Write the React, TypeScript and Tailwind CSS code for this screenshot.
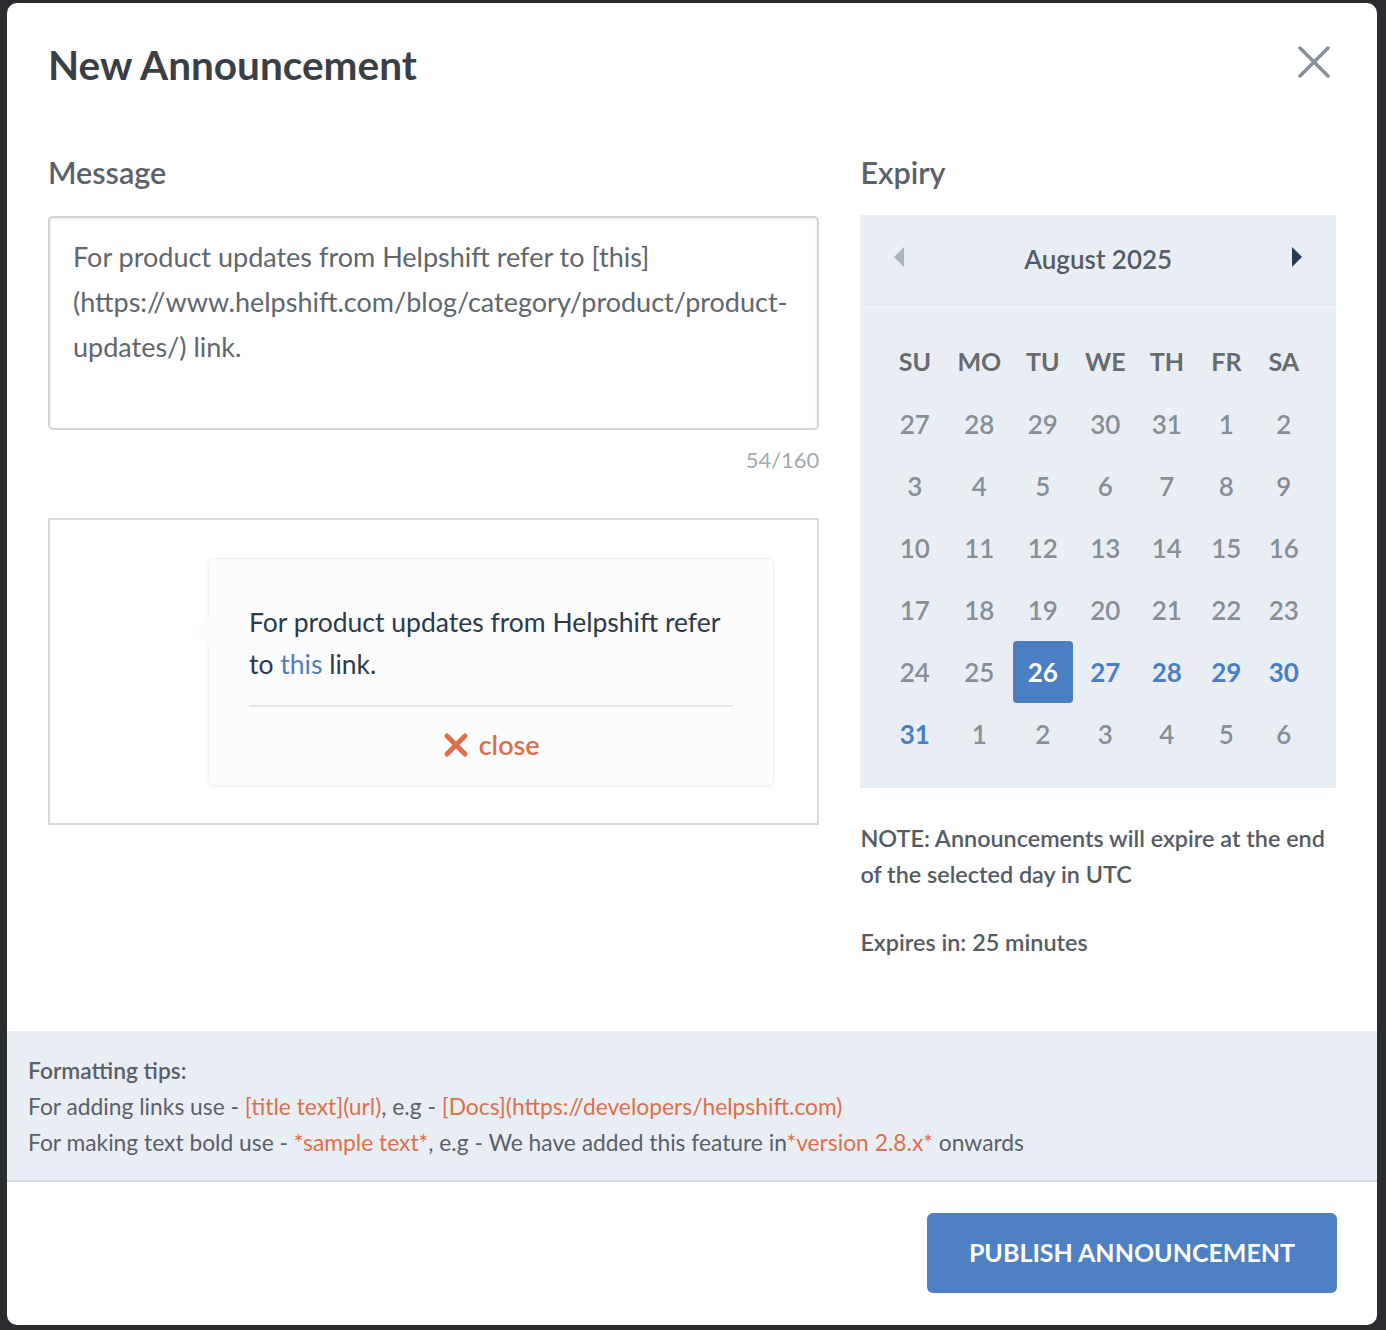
import { useState } from 'react';

const FONT = "font-['Lato','Noto_Sans',sans-serif]";

type Day = { n: number; muted?: boolean; future?: boolean; selected?: boolean };

const WEEKS: Day[][] = [
  [27, 28, 29, 30, 31].map((n) => ({ n, muted: true })).concat([{ n: 1 }, { n: 2 }]),
  [3, 4, 5, 6, 7, 8, 9].map((n) => ({ n })),
  [10, 11, 12, 13, 14, 15, 16].map((n) => ({ n })),
  [17, 18, 19, 20, 21, 22, 23].map((n) => ({ n })),
  [
    { n: 24 },
    { n: 25 },
    { n: 26, selected: true },
    { n: 27, future: true },
    { n: 28, future: true },
    { n: 29, future: true },
    { n: 30, future: true },
  ],
  [{ n: 31, future: true }, ...[1, 2, 3, 4, 5, 6].map((n) => ({ n, muted: true }))],
];

const DAY_NAMES = ['SU', 'MO', 'TU', 'WE', 'TH', 'FR', 'SA'];

const Calendar = () => {
  return (
    <div className="mt-[23px] bg-[#e9eef5]">
      <div className="flex h-[90px] items-center justify-between border-b border-[#e1e5ea] px-[34px]">
        <svg width="10" height="20" viewBox="0 0 10 20" className="mt-[-6px]">
          <path d="M10 0 L0 10 L10 20 Z" fill="#a9b4c0" />
        </svg>
        <span className="text-[26px] font-semibold text-[#555c65]">August 2025</span>
        <svg width="10" height="20" viewBox="0 0 10 20" className="mt-[-6px]">
          <path d="M0 0 L10 10 L0 20 Z" fill="#263a52" />
        </svg>
      </div>
      <div className="grid grid-cols-[65px_64px_63px_62px_61px_58px_57px] pl-[22px] pt-[26px] pb-[23px]">
        {DAY_NAMES.map((d) => (
          <div
            key={d}
            className="flex h-[62px] items-center justify-center text-[25px] font-bold text-[#676a6e]"
          >
            {d}
          </div>
        ))}
        {WEEKS.flat().map((day, i) => (
          <div key={i} className="flex h-[62px] items-center justify-center">
            {day.selected ? (
              <span className="flex h-[62px] w-[60px] items-center justify-center rounded-[4px] bg-[#4b7fc4] text-[26px] font-bold text-white">
                {day.n}
              </span>
            ) : (
              <span
                className={
                  day.future
                    ? 'text-[26px] font-bold text-[#4a7fc4]'
                    : 'text-[26px] font-semibold text-[#878e96]'
                }
              >
                {day.n}
              </span>
            )}
          </div>
        ))}
      </div>
    </div>
  );
};

const PreviewCard = () => (
  <div className="mt-[43px] h-[307px] border-2 border-[#d9d9d9] pl-[158px] pr-[43px] pt-[38px]">
    <div className="relative rounded-[6px] border border-[#f1f1f1] bg-[#fcfcfc] px-[40px] pt-[42px] pb-[20px] shadow-[0_1px_4px_rgba(0,0,0,0.06)]">
      <div className="absolute left-[-10px] top-[62px] h-[20px] w-[20px] rotate-45 bg-[#fcfcfc]" />
      <p className="relative text-[26.5px] leading-[42px] text-[#2b394a]">
        For product updates from Helpshift refer to <span className="text-[#4a7fc4]">this</span> link.
      </p>
      <div className="mt-[20px] border-t-2 border-[#e6e6e6]" />
      <div className="mt-[18px] flex h-[40px] items-center justify-center gap-[10px] text-[#de6e4a]">
        <svg width="26" height="26" viewBox="0 0 26 26">
          <path d="M4 4 L22 22 M22 4 L4 22" stroke="#de6e4a" strokeWidth="5" strokeLinecap="round" />
        </svg>
        <span className="text-[27px] font-semibold">close</span>
      </div>
    </div>
  </div>
);

export default function App() {
  const [message] = useState(
    'For product updates from Helpshift refer to [this](https://www.helpshift.com/blog/category/product/product-updates/) link.',
  );

  return (
    <div className={`min-h-[1330px] bg-[#2a2c2f] pt-[3px] pl-[7px] pr-[9px] ${FONT}`}>
      <div className="flex h-[1322px] flex-col overflow-hidden rounded-[10px] bg-white">
        <header className="flex items-start justify-between pl-[41px] pr-[47px] pt-[35px]">
          <h1 className="text-[40.5px] font-bold leading-[54px] text-[#3a3f45]">New Announcement</h1>
          <button className="mt-[8px]" aria-label="Close">
            <svg width="32" height="32" viewBox="0 0 32 32">
              <path d="M2 2 L30 30 M30 2 L2 30" stroke="#878f97" strokeWidth="3.5" strokeLinecap="round" />
            </svg>
          </button>
        </header>

        <div className="flex flex-1 gap-[41px] px-[41px] pt-[60px]">
          <section className="w-[772px]">
            <h2 className="text-[30.5px] font-semibold leading-[40px] text-[#5b6168]">Message</h2>
            <textarea
              readOnly
              value={message}
              className="mt-[24px] block h-[214px] w-full resize-none rounded-[5px] border-2 border-[#d3d3d3] px-[23px] pt-[16px] text-[27px] leading-[45px] text-[#60666d] shadow-[inset_0_1px_3px_rgba(0,0,0,0.08)] outline-none"
            />
            <div className="mt-[15px] text-right text-[22px] leading-[30px] text-[#a3aab2]">54/160</div>
            <PreviewCard />
          </section>

          <section className="w-[476px]">
            <h2 className="text-[30.5px] font-semibold leading-[40px] text-[#5b6168]">Expiry</h2>
            <Calendar />
            <p className="mt-[32px] text-[23.4px] font-semibold leading-[36px] text-[#545b63]">
              NOTE: Announcements will expire at the end of the selected day in UTC
            </p>
            <p className="mt-[32px] text-[23.4px] font-semibold leading-[36px] text-[#545b63]">
              Expires in: 25 minutes
            </p>
          </section>
        </div>

        <div className="border-b-2 border-[#d6d9dd] bg-[#e9eef5] px-[21px] pt-[21px] pb-[20px] text-[22.8px] leading-[36px] text-[#5a6067]">
          <div className="font-semibold">Formatting tips:</div>
          <div>
            For adding links use - <span className="text-[#de6e4a]">[title text](url)</span>, e.g -{' '}
            <span className="text-[#de6e4a]">[Docs](https://developers/helpshift.com)</span>
          </div>
          <div>
            For making text bold use - <span className="text-[#de6e4a]">*sample text*</span>, e.g - We have
            added this feature in<span className="text-[#de6e4a]">*version 2.8.x*</span> onwards
          </div>
        </div>

        <div className="flex justify-end px-[40px] pt-[31px] pb-[32px]">
          <button className="flex h-[80px] w-[410px] items-center justify-center rounded-[6px] bg-[#4e80c4] text-[25px] font-bold text-white">
            PUBLISH ANNOUNCEMENT
          </button>
        </div>
      </div>
    </div>
  );
}
